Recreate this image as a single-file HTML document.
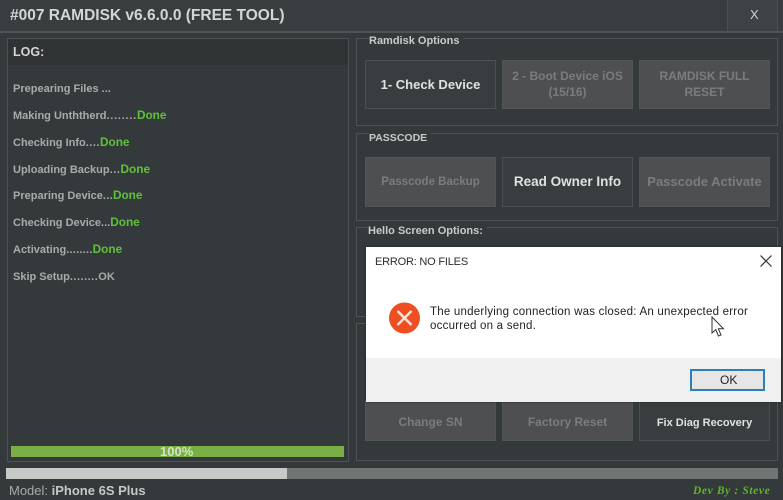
<!DOCTYPE html>
<html><head><meta charset="utf-8">
<style>
html,body{margin:0;padding:0}
body{width:783px;height:500px;overflow:hidden;position:relative;background:#34393b;font-family:"Liberation Sans",sans-serif}
div,span.a{position:absolute;box-sizing:border-box}
.t{white-space:nowrap;filter:blur(.3px)}
.log{left:13px;font-size:11px;font-weight:bold;color:#a9abab;line-height:14px;white-space:nowrap;filter:blur(.3px)}
.log b{color:#5fc23a;font-size:11.8px}
.log i{font-style:normal}
.grp{left:356px;width:422px;border:1px solid #4c5255}
.gl{left:369px;font-size:11px;font-weight:bold;color:#c9cbcb;background:#34393b;padding:0 0;line-height:14px;white-space:nowrap;filter:blur(.3px)}
.btn{width:131px;display:flex;align-items:center;justify-content:center;text-align:center;font-size:12px;font-weight:bold;line-height:16px;border:1px solid #4b5054;background:#383d3f;color:#e0e2e2}
.btn.d{background:#4d4f50;border-color:#525455;color:#7b7d7d}
.btn span{filter:blur(.3px)}
</style></head><body>
<div style="left:0;top:0;width:783px;height:31px;background:#383d3f"></div>
<div style="left:0;top:31px;width:783px;height:2px;background:#4d5356"></div>
<div class="t" style="left:10px;top:6px;font-size:15.5px;font-weight:bold;color:#d4d6d5;line-height:20px">#007 RAMDISK v6.6.0.0 (FREE TOOL)</div>
<div style="left:727px;top:0;width:51px;height:31px;background:#3d4244;border-left:1px solid #4b5053;border-right:1px solid #4b5053"></div>
<div class="t" style="left:750px;top:7px;font-size:13px;color:#d0d2d2;line-height:16px">X</div>

<div style="left:7px;top:38px;width:342px;height:424px;border:1px solid #4c5255"></div>
<div style="left:8px;top:39px;width:340px;height:26px;background:#2f3334"></div>
<div class="t" style="left:13px;top:44px;font-size:12.5px;font-weight:bold;color:#d4d6d5;line-height:16px">LOG:</div>
<div class="log" style="top:82px">Prepearing Files ...</div>
<div class="log" style="top:108px">Making Unththerd<i style="letter-spacing:.75px">........</i><b>Done</b></div>
<div class="log" style="top:135px">Checking Info<i style="letter-spacing:.5px">....</i><b>Done</b></div>
<div class="log" style="top:162px">Uploading Backup<i style="letter-spacing:.6px">...</i><b>Done</b></div>
<div class="log" style="top:188px">Preparing Device<i style="letter-spacing:.3px">...</i><b>Done</b></div>
<div class="log" style="top:215px">Checking Device...<b>Done</b></div>
<div class="log" style="top:242px">Activating<i style="letter-spacing:.25px">........</i><b>Done</b></div>
<div class="log" style="top:270px">Skip Setup<i style="letter-spacing:.5px">........</i>OK</div>
<div style="left:11px;top:446px;width:333px;height:11px;background:#78b045"></div>
<div class="t" style="left:160px;top:445px;font-size:13px;font-weight:bold;color:#d5e4c4;line-height:13px">100%</div>

<div class="grp" style="top:38px;height:88px"></div>
<div class="gl" style="top:34px;padding-right:4px">Ramdisk Options</div>
<div class="btn" style="left:365px;top:60px;height:49px;font-size:13px"><span>1- Check Device</span></div>
<div class="btn d" style="left:502px;top:60px;height:49px"><span style="margin-top:-2px">2 - Boot Device iOS<br>(15/16)</span></div>
<div class="btn d" style="left:639px;top:60px;height:49px"><span style="margin-top:-2px">RAMDISK FULL<br>RESET</span></div>

<div class="grp" style="top:133px;height:88px"></div>
<div class="gl" style="top:131px;padding-right:4px;font-size:10.5px">PASSCODE</div>
<div class="btn d" style="left:365px;top:157px;height:50px;font-size:11.5px"><span>Passcode Backup</span></div>
<div class="btn" style="left:502px;top:157px;height:50px;font-size:13.5px"><span>Read Owner Info</span></div>
<div class="btn d" style="left:639px;top:157px;height:50px;font-size:13px"><span>Passcode Activate</span></div>

<div class="grp" style="top:227px;height:90px"></div>
<div class="gl" style="left:368px;top:224px;padding-right:4px">Hello Screen Options:</div>
<div class="grp" style="top:323px;height:138px"></div>

<div class="btn d" style="left:365px;top:400px;height:41px"><span style="margin-top:2px">Change SN</span></div>
<div class="btn d" style="left:502px;top:400px;height:41px"><span style="margin-top:2px">Factory Reset</span></div>
<div class="btn" style="left:639px;top:400px;height:41px;font-size:11px"><span style="margin-top:4px">Fix Diag Recovery</span></div>

<div style="left:6px;top:468px;width:772px;height:11px;background:#717573"></div>
<div style="left:6px;top:468px;width:281px;height:11px;background:#c8cac8"></div>
<div class="t" style="left:9px;top:483px;font-size:13px;color:#a9abab;line-height:15px">Model: <b style="color:#c6c8c8;font-size:13px">iPhone 6S Plus</b></div>
<div class="t" style="left:693px;top:484px;font-family:'Liberation Serif',serif;font-size:11.5px;font-style:italic;font-weight:bold;color:#5fb52a;line-height:14px;letter-spacing:.62px">Dev By : Steve</div>

<div style="left:366px;top:247px;width:415px;height:155px;background:#fff;box-shadow:0 0 2px rgba(0,0,0,.5)"></div>
<div style="left:366px;top:358px;width:415px;height:44px;background:#f0f0f0"></div>
<div class="t" style="left:375px;top:255px;font-size:11px;letter-spacing:-.2px;color:#2b2b2b;line-height:15px">ERROR: NO FILES</div>
<svg style="position:absolute;left:759px;top:254px" width="14" height="14" viewBox="0 0 14 14"><path d="M1.5 1.5L12.5 12.5M12.5 1.5L1.5 12.5" stroke="#333" stroke-width="1.2" fill="none"/></svg>
<svg style="position:absolute;left:388px;top:302px" width="33" height="32" viewBox="0 0 33 32"><circle cx="16.5" cy="16" r="15.5" fill="#ee4f22"/><path d="M9.5 9L23.5 23M23.5 9L9.5 23" stroke="#fbe6dd" stroke-width="2.4" fill="none"/></svg>
<div class="t" style="left:430px;top:305px;font-size:11.5px;color:#222;line-height:14px;letter-spacing:.23px">The underlying connection was closed: An unexpected error<br>occurred on a send.</div>
<div style="left:690px;top:369px;width:75px;height:22px;background:#e6e6e6;border:2px solid #2f7fb5"></div>
<div class="t" style="left:720px;top:373px;font-size:12px;color:#222;line-height:15px">OK</div>
<svg style="position:absolute;left:710px;top:316px" width="16" height="22" viewBox="0 0 16 22"><path d="M2 1V17L5.8 13.6L8.4 20L11 19L8.4 12.8H13.5Z" fill="#fff" stroke="#333" stroke-width="1"/></svg>
</body></html>
